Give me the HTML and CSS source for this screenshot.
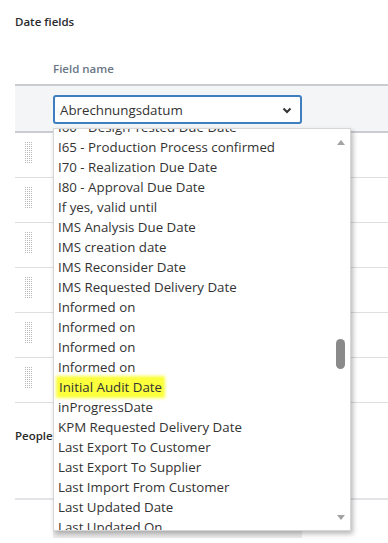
FILE: index.html
```html
<!DOCTYPE html>
<html lang="en">
<head>
    <meta charset="UTF-8">
    <title>Date fields</title>
    <link rel="stylesheet" href="styles.css">
</head>
<body>
    <div class="section-title">Date fields</div>

    <div class="field-table">
        <div class="table-head">Field name</div>
        <div class="table-row selected">
            <div class="select-box">
                <span>Abrechnungsdatum</span>
                <svg class="chevron" width="10" height="7" viewBox="0 0 10 7"><path d="M1.5 1.5 L5 5 L8.5 1.5" fill="none" stroke="#333" stroke-width="2"/></svg>
            </div>
        </div>
        <div class="table-row"><div class="handle"></div></div>
        <div class="table-row"><div class="handle"></div></div>
        <div class="table-row"><div class="handle"></div></div>
        <div class="table-row"><div class="handle"></div></div>
        <div class="table-row"><div class="handle"></div></div>
        <div class="table-row"><div class="handle"></div></div>
    </div>

    <div class="section-title people">People</div>
    <div class="people-table">
        <div class="people-select"></div>
    </div>

    <div class="dropdown">
        <ul class="options">
            <li>I60 - Design Tested Due Date</li>
            <li>I65 - Production Process confirmed</li>
            <li>I70 - Realization Due Date</li>
            <li>I80 - Approval Due Date</li>
            <li>If yes, valid until</li>
            <li>IMS Analysis Due Date</li>
            <li>IMS creation date</li>
            <li>IMS Reconsider Date</li>
            <li>IMS Requested Delivery Date</li>
            <li>Informed on</li>
            <li>Informed on</li>
            <li>Informed on</li>
            <li>Informed on</li>
            <li><span class="marker">Initial Audit Date</span></li>
            <li>inProgressDate</li>
            <li>KPM Requested Delivery Date</li>
            <li>Last Export To Customer</li>
            <li>Last Export To Supplier</li>
            <li>Last Import From Customer</li>
            <li>Last Updated Date</li>
            <li>Last Updated On</li>
        </ul>
        <div class="scrollbar">
            <span class="arrow up"></span>
            <span class="thumb"></span>
            <span class="arrow down"></span>
        </div>
    </div>
</body>
</html>
```

FILE: styles.css
```css
* {
    margin: 0;
    padding: 0;
    box-sizing: border-box;
}

body {
    background: #ffffff;
    color: #333;
    font-family: "Open Sans", "Noto Sans", sans-serif;
    overflow: hidden;
    position: relative;
    height: 543px;
}

.section-title {
    font-size: 11.5px;
    font-weight: 600;
    color: #2b2b2b;
    padding: 14px 0 0 15px;
    height: 48px;
}

.field-table {
    margin-left: 15px;
}

.table-head {
    font-size: 11.5px;
    font-weight: 600;
    color: #6b7785;
    padding: 13px 0 0 38px;
    height: 38px;
    border-bottom: 2px solid #c9ccd0;
}

.table-row {
    height: 45px;
    border-bottom: 1px solid #dde0e3;
    display: flex;
    align-items: center;
    padding-left: 10px;
}

.table-row.selected {
    height: 47px;
    background: #f4f5f7;
    border-bottom: 2px solid #c9ccd0;
    padding-left: 38px;
    align-items: flex-start;
    padding-top: 9px;
}

.handle {
    width: 8px;
    height: 22px;
    margin-top: -4px;
    background-color: #b9b9b9;
    background-image:
        linear-gradient(to bottom, transparent 1px, #fff 1px),
        linear-gradient(to right, transparent 1px, #fff 1px);
    background-size: 2px 2px;
}

.select-box {
    width: 249px;
    height: 29px;
    border: 2px solid #3f7fbf;
    border-radius: 3px;
    background: #fff;
    display: flex;
    align-items: center;
    justify-content: space-between;
    padding: 0 8px 0 5px;
    font-size: 13.3px;
    color: #333;
}

.chevron {
    margin-top: 1px;
}

.people {
    padding-top: 25px;
    height: 95px;
}

.people-table {
    margin-left: 15px;
    border-top: 2px solid #e2e4e7;
    padding: 4px 0 0 38px;
}

.people-select {
    width: 249px;
    height: 34px;
    background: #ececec;
}

.dropdown {
    position: absolute;
    left: 53px;
    top: 128px;
    width: 298px;
    height: 403px;
    background: #fff;
    border: 1px solid #d6d6d6;
    box-shadow: 2px 3px 5px rgba(0, 0, 0, 0.28);
    overflow: hidden;
}

.options {
    list-style: none;
    margin-top: -12px;
    padding-left: 4px;
    font-size: 13.3px;
    color: #333;
}

.options li {
    height: 20px;
    line-height: 20px;
    white-space: nowrap;
}

.marker {
    background: #fbff3c;
    box-shadow: 0 0 3px 2px #fbff3c;
    padding: 0 1px;
}

.scrollbar {
    position: absolute;
    right: 0;
    top: 0;
    width: 17px;
    height: 100%;
}

.arrow {
    position: absolute;
    left: 4px;
    width: 0;
    height: 0;
    border-left: 4.5px solid transparent;
    border-right: 4.5px solid transparent;
}

.arrow.up {
    top: 11px;
    border-bottom: 5px solid #a3a3a3;
}

.arrow.down {
    bottom: 10px;
    border-top: 5px solid #a3a3a3;
}

.thumb {
    position: absolute;
    left: 3px;
    top: 210px;
    width: 9px;
    height: 30px;
    border-radius: 5px;
    background: #8a8a8a;
}
```
